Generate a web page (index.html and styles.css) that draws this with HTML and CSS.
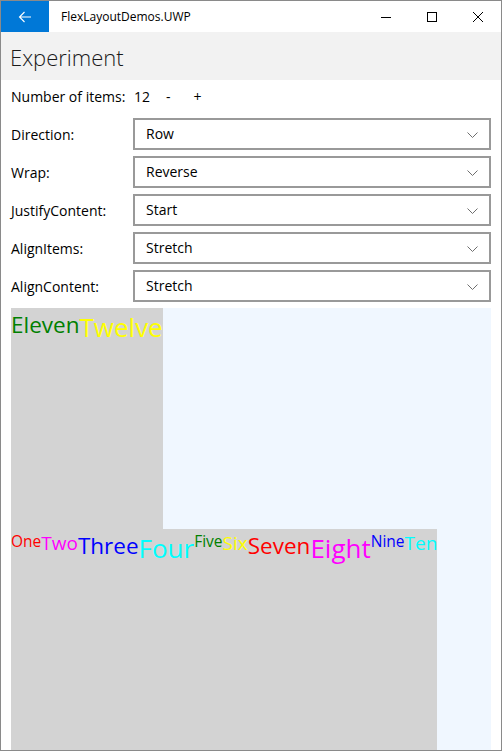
FILE: index.html
```html
<!DOCTYPE html>
<html>
<head>
<meta charset="utf-8">
<link rel="stylesheet" href="styles.css">
</head>
<body>
<div class="window">
  <div class="titlebar">
    <div class="back">
      <svg width="14" height="12" viewBox="0 0 14 12"><path d="M13 6H1.5M6.5 1L1.5 6L6.5 11" fill="none" stroke="#fff" stroke-width="1.1"/></svg>
    </div>
    <div class="app-title">FlexLayoutDemos.UWP</div>
    <div class="controls">
      <div class="ctl"><svg width="10" height="10" viewBox="0 0 10 10"><path d="M0 5.5H10" stroke="#000" stroke-width="1"/></svg></div>
      <div class="ctl"><svg width="10" height="10" viewBox="0 0 10 10"><rect x="0.5" y="0.5" width="9" height="9" fill="none" stroke="#000" stroke-width="1"/></svg></div>
      <div class="ctl"><svg width="10" height="10" viewBox="0 0 10 10"><path d="M0 0L10 10M10 0L0 10" stroke="#000" stroke-width="1"/></svg></div>
    </div>
  </div>
  <div class="header">Experiment</div>
  <div class="content">
    <div class="num-row">
      <span class="num-label">Number of items:</span>
      <span class="num-value">12</span>
      <span class="btns"><span class="btn">-</span><span class="btn">+</span></span>
    </div>
    <div class="row"><span class="label">Direction:</span><div class="combo"><span>Row</span><svg class="chev" width="11" height="6" viewBox="0 0 11 6"><path d="M0.5 0.5L5.5 5.5L10.5 0.5" fill="none" stroke="#6e6e6e" stroke-width="1"/></svg></div></div>
    <div class="row"><span class="label">Wrap:</span><div class="combo"><span>Reverse</span><svg class="chev" width="11" height="6" viewBox="0 0 11 6"><path d="M0.5 0.5L5.5 5.5L10.5 0.5" fill="none" stroke="#6e6e6e" stroke-width="1"/></svg></div></div>
    <div class="row"><span class="label">JustifyContent:</span><div class="combo"><span>Start</span><svg class="chev" width="11" height="6" viewBox="0 0 11 6"><path d="M0.5 0.5L5.5 5.5L10.5 0.5" fill="none" stroke="#6e6e6e" stroke-width="1"/></svg></div></div>
    <div class="row"><span class="label">AlignItems:</span><div class="combo"><span>Stretch</span><svg class="chev" width="11" height="6" viewBox="0 0 11 6"><path d="M0.5 0.5L5.5 5.5L10.5 0.5" fill="none" stroke="#6e6e6e" stroke-width="1"/></svg></div></div>
    <div class="row"><span class="label">AlignContent:</span><div class="combo"><span>Stretch</span><svg class="chev" width="11" height="6" viewBox="0 0 11 6"><path d="M0.5 0.5L5.5 5.5L10.5 0.5" fill="none" stroke="#6e6e6e" stroke-width="1"/></svg></div></div>
    <div class="flex-area">
      <span class="item s1 red">One</span>
      <span class="item s2 magenta">Two</span>
      <span class="item s3 blue">Three</span>
      <span class="item s4 cyan">Four</span>
      <span class="item s1 green">Five</span>
      <span class="item s2 yellow">Six</span>
      <span class="item s3 red">Seven</span>
      <span class="item s4 magenta">Eight</span>
      <span class="item s1 blue">Nine</span>
      <span class="item s2 cyan">Ten</span>
      <span class="item s3 green">Eleven</span>
      <span class="item s4 yellow">Twelve</span>
    </div>
  </div>
</div>
</body>
</html>
```

FILE: styles.css
```css
* { box-sizing: border-box; }
html, body { margin: 0; padding: 0; background: #fff; }
body { font-family: "Open Sans", "Noto Sans", sans-serif; color: #000; }

.window {
  width: 502px;
  height: 751px;
  border: 1px solid #8a8a8a;
  display: flex;
  flex-direction: column;
  overflow: hidden;
  background: #fff;
}

.titlebar {
  height: 31px;
  display: flex;
  align-items: center;
  flex: none;
}
.back {
  width: 48px;
  height: 31px;
  background: #0078d7;
  display: flex;
  align-items: center;
  justify-content: center;
}
.app-title {
  margin-left: 12px;
  font-size: 12px;
  color: #000;
  flex: 1;
}
.controls { display: flex; height: 31px; }
.ctl {
  width: 46px;
  height: 31px;
  display: flex;
  align-items: center;
  justify-content: center;
}

.header {
  height: 48px;
  flex: none;
  background: #f2f2f2;
  font-size: 22px;
  font-weight: 300;
  color: #1a1a1a;
  padding-left: 9px;
  display: flex;
  align-items: center;
  padding-top: 2px;
}

.content {
  flex: 1;
  display: flex;
  flex-direction: column;
  gap: 6px;
  padding: 0 10px;
  min-height: 0;
}

.num-row {
  height: 32px;
  display: flex;
  align-items: center;
  font-size: 14px;
}
.num-label { width: 123px; }
.num-value { width: 24px; }
.btns { display: flex; gap: 7px; }
.btn { padding: 0 8px; }

.row {
  height: 32px;
  display: flex;
  align-items: center;
  font-size: 14px;
}
.label { width: 122px; flex: none; }
.combo {
  flex: 1;
  height: 32px;
  border: 2px solid #999;
  display: flex;
  align-items: center;
  justify-content: space-between;
  padding: 0 11px 1px 11px;
}
.chev { margin-top: 2px; }

.flex-area {
  flex: 1;
  min-height: 0;
  background: #f0f7ff;
  display: flex;
  flex-wrap: wrap-reverse;
  align-items: stretch;
  align-content: stretch;
  justify-content: flex-start;
}
.item {
  background: #d3d3d3;
  line-height: 1.42;
  padding-top: 1px;
  white-space: nowrap;
}
.s1 { font-size: 15.5px; }
.s2 { font-size: 19px; }
.s3 { font-size: 22.5px; }
.s4 { font-size: 26px; }
.red { color: #ff0000; }
.magenta { color: #ff00ff; }
.blue { color: #0000ff; }
.cyan { color: #00ffff; }
.green { color: #008000; }
.yellow { color: #ffff00; }
```
